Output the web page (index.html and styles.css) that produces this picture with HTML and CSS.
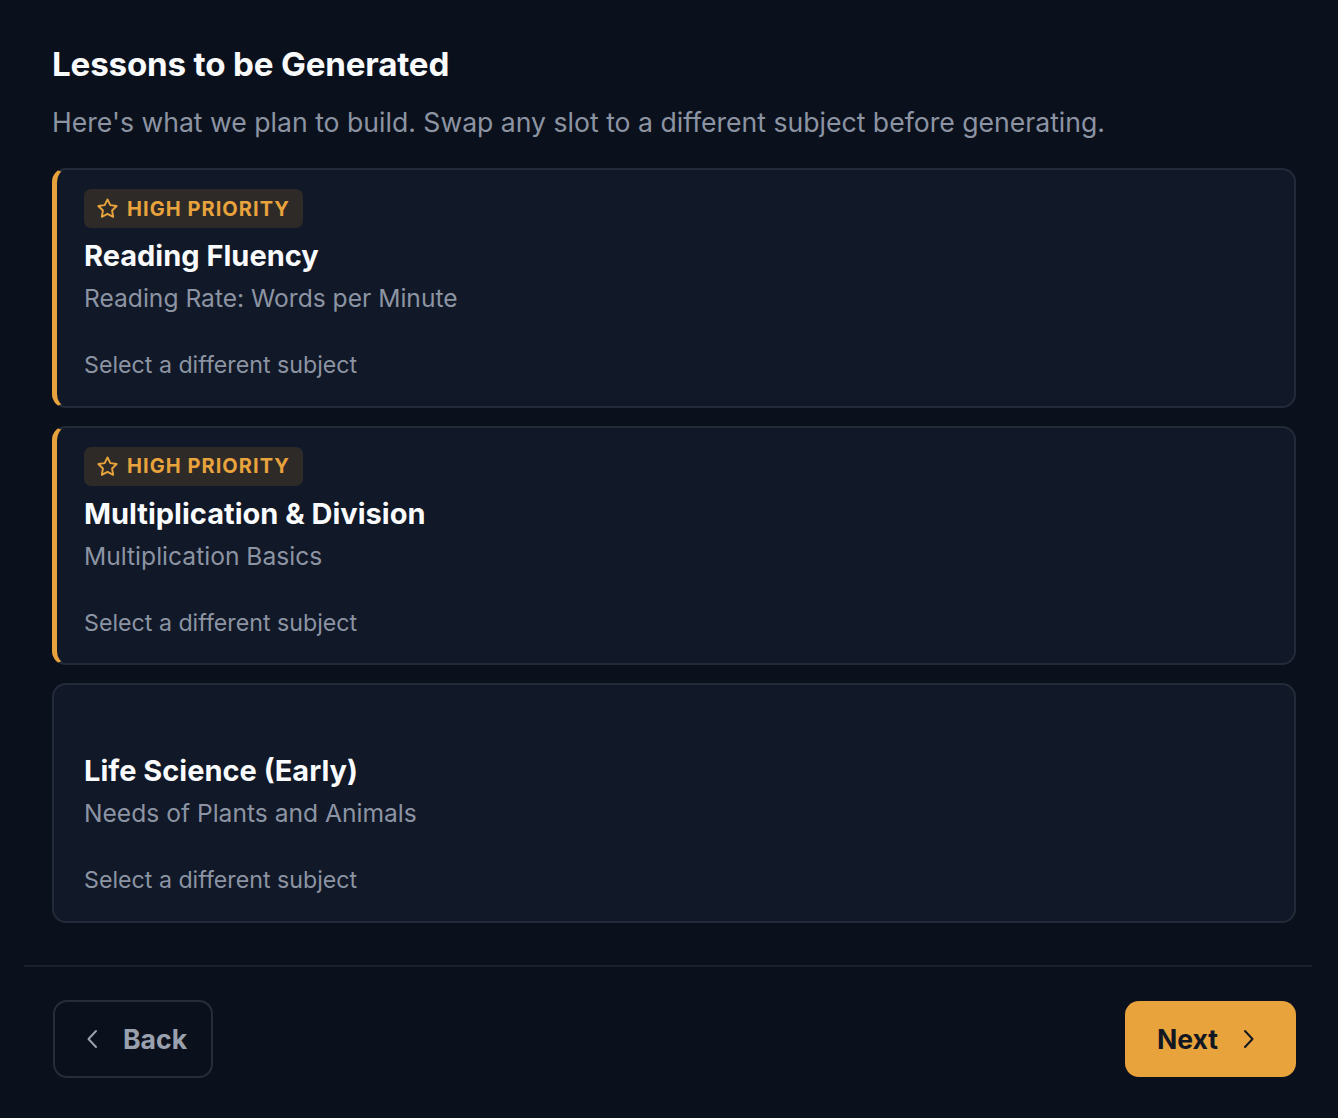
FILE: index.html
```html
<!DOCTYPE html>
<html lang="en">
<head>
<meta charset="utf-8">
<title>Lessons to be Generated</title>
<link rel="stylesheet" href="styles.css">
</head>
<body>
<main class="panel">
  <section class="content">
    <h1 class="title">Lessons to be Generated</h1>
    <p class="lead">Here's what we plan to build. Swap any slot to a different subject before generating.</p>

    <div class="slots">
      <article class="slot slot--priority">
        <span class="badge">
          <svg class="badge-icon" viewBox="0 0 24 24" fill="none" stroke="currentColor" stroke-width="2" stroke-linejoin="round" stroke-linecap="round"><path d="M12 2.5l2.95 5.98 6.6.96-4.78 4.65 1.13 6.57L12 17.56 6.1 20.66l1.13-6.57L2.45 9.44l6.6-.96z"/></svg>
          HIGH PRIORITY
        </span>
        <h2 class="slot-title">Reading Fluency</h2>
        <p class="slot-sub">Reading Rate: Words per Minute</p>
        <button class="swap" type="button">Select a different subject</button>
      </article>

      <article class="slot slot--priority">
        <span class="badge">
          <svg class="badge-icon" viewBox="0 0 24 24" fill="none" stroke="currentColor" stroke-width="2" stroke-linejoin="round" stroke-linecap="round"><path d="M12 2.5l2.95 5.98 6.6.96-4.78 4.65 1.13 6.57L12 17.56 6.1 20.66l1.13-6.57L2.45 9.44l6.6-.96z"/></svg>
          HIGH PRIORITY
        </span>
        <h2 class="slot-title">Multiplication &amp; Division</h2>
        <p class="slot-sub">Multiplication Basics</p>
        <button class="swap" type="button">Select a different subject</button>
      </article>

      <article class="slot">
        <span class="badge badge--empty"></span>
        <h2 class="slot-title">Life Science (Early)</h2>
        <p class="slot-sub">Needs of Plants and Animals</p>
        <button class="swap" type="button">Select a different subject</button>
      </article>
    </div>
  </section>

  <footer class="actions">
    <button class="btn btn--ghost" type="button">
      <svg class="chev" viewBox="0 0 24 24" fill="none" stroke="currentColor" stroke-width="2" stroke-linecap="round" stroke-linejoin="round"><path d="M15 4l-7.5 8 7.5 8"/></svg>
      Back
    </button>
    <button class="btn btn--primary" type="button">
      Next
      <svg class="chev" viewBox="0 0 24 24" fill="none" stroke="currentColor" stroke-width="2" stroke-linecap="round" stroke-linejoin="round"><path d="M9 4l7.5 8-7.5 8"/></svg>
    </button>
  </footer>
</main>
</body>
</html>
```

FILE: styles.css
```css
* { box-sizing: border-box; }

html, body {
  margin: 0;
  background: #0b111c;
}

body {
  font-family: Inter, "Noto Sans", sans-serif;
  color: #f3f5f8;
}

.panel {
  padding: 0 26px 0 24px;
}

.content {
  padding: 44px 16px 42px 28px;
}

.title {
  margin: 0;
  font-size: 33.2px;
  font-weight: 700;
  line-height: 40px;
  letter-spacing: -0.2px;
  color: #f8fafc;
}

.lead {
  margin: 21px 0 29px;
  font-size: 26.6px;
  line-height: 34px;
  color: #8c94a3;
}

.slots {
  display: flex;
  flex-direction: column;
  gap: 18px;
}

.slot {
  background: #111827;
  border: 2px solid #232b39;
  border-radius: 14px;
  padding: 19px 30px 0 30px;
  display: flex;
  flex-direction: column;
  align-items: flex-start;
  height: 239.5px;
}

.slot--priority {
  border-left: 5px solid #e8a33d;
  padding-left: 27px;
}

.badge {
  display: inline-flex;
  align-items: center;
  gap: 8px;
  height: 39px;
  padding: 0 13px 0 12px;
  border-radius: 7px;
  background: #2d2a27;
  color: #e8a33d;
  font-size: 20px;
  font-weight: 700;
  letter-spacing: 1.05px;
}

.badge--empty {
  visibility: hidden;
}

.badge-icon {
  width: 23px;
  height: 23px;
}

.slot-title {
  margin: 8px 0 0;
  font-size: 29px;
  font-weight: 700;
  line-height: 40px;
  color: #f8fafc;
}

.slot-sub {
  margin: 7px 0 0;
  font-size: 24.6px;
  line-height: 30px;
  color: #8c94a3;
}

.swap {
  margin-top: 38px;
  padding: 0;
  border: 0;
  background: none;
  font-family: inherit;
  font-size: 23.2px;
  line-height: 28px;
  color: #8c94a3;
  cursor: pointer;
}

.actions {
  border-top: 2px solid #1a202c;
  display: flex;
  justify-content: space-between;
  align-items: center;
  padding: 33px 16px 40px 29px;
}

.btn {
  display: inline-flex;
  align-items: center;
  font-family: inherit;
  font-size: 26.6px;
  font-weight: 700;
  border-radius: 14px;
  cursor: pointer;
}

.btn--ghost {
  height: 78px;
  padding: 0 24px 0 26px;
  gap: 18px;
  background: transparent;
  border: 2px solid #262d3a;
  color: #9aa1ae;
}

.btn--primary {
  height: 76px;
  padding: 0 36px 0 32px;
  gap: 18px;
  background: #e8a33d;
  border: 0;
  color: #121722;
}

.chev {
  width: 24px;
  height: 24px;
}
```
